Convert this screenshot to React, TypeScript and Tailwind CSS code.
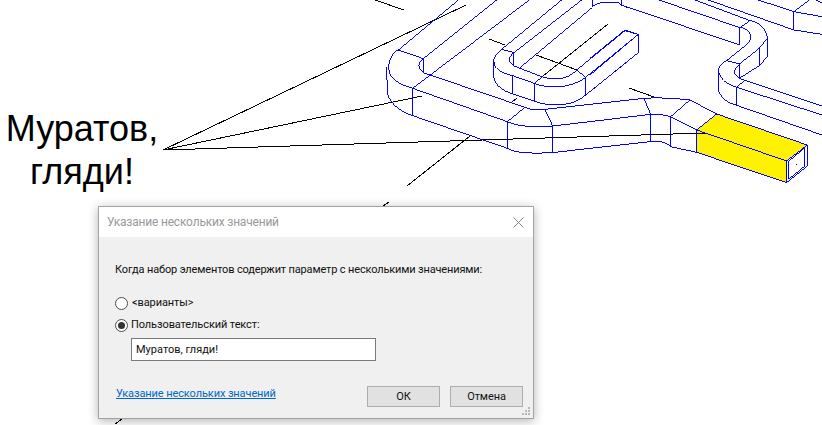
// 3x crop coordinates were easiest to read the drawing from, hence the scaled groups
const blackLines = [
  'M163 150L466 5',
  'M163 150L422 96',
  'M163 150L705 133',
  'M375 0L404 10',
  'M407 186L470 136',
  'M489 39L505 45',
  'M536 55L577 70',
  'M512 102L517 98',
  'M543 76L608 24',
  'M629 88L654 97',
  'M626 7L628 8',
  'M383 206L389 202',
  'M115 424L122 419',
];

const bigShape = [
  'M265 0L85 150C60 160 40 215 75 240C90 252 105 258 128 265L412 365C440 378 490 384 548 378L660 365',
  'M50 200L52 280C60 310 90 335 128 347L412 445C440 462 500 460 548 458L660 445',
  'M128 265V347M412 365V445M548 378V458',
  'M85 150L160 176V218C140 200 145 190 160 176M160 218L465 322C490 332 505 330 525 328L660 313',
  'M380 0L160 176M478 0L128 265M465 322L412 365M525 328C532 345 540 360 548 378',
];

const uShape = [
  'M245 0L65 148C45 165 38 180 42 185C42 195 45 200 50 205C65 218 80 222 98 227L163 250C200 265 270 268 317 232',
  'M42 185V235C45 250 60 270 98 282L163 303C210 322 280 320 317 285',
  'M98 227V282M163 250V303M317 232V285',
  'M65 148L102 158V198C82 182 85 172 102 158M305 0L102 158M102 198L180 228C215 243 265 240 290 210L317 232',
  'M118 205L337 22M163 250L190 228M290 210L435 92L475 103V158L317 285M317 232L475 103',
  'M337 0V20C350 12 358 8 365 8H415L425 15M425 0V15',
];

const rightShape = [
  'M93 15L450 135M207 0L450 83M315 0L480 62M355 0L612 90M505 0L612 35M612 35V90M612 35L696 50M612 90L696 103M612 35L658 0M678 0L696 8',
  'M450 83L480 62C505 65 530 85 532 115V170L508 197V145L532 115M450 83V135',
  'M450 83C475 85 492 105 475 130L410 182L448 192M508 145L448 192V235L508 197M448 195C428 210 430 222 448 235L696 318',
  'M410 182C390 190 385 205 385 215V270C395 300 420 310 440 316L696 405M385 215C395 245 420 256 440 262L696 345M440 262V316M440 262L465 240',
  'M105 90L145 103V158L0 275M0 175L105 90M0 225L145 103',
  'M0 313L162 295C200 292 260 295 300 300L380 342M0 365L182 343C200 342 225 345 242 350L320 390M0 445L182 425C205 422 225 424 242 440L320 457',
  'M162 295L182 343V425M242 350V440M242 350L300 300M320 390V457M320 390L380 342',
  'M380 342L652 435V498L590 548L320 457M320 390L590 483V548M652 435L590 483',
  'M597 483V537L645 498V443ZM618 493H620',
];

function Drawing() {
  return (
    <svg className="absolute inset-0" width="822" height="425" viewBox="0 0 822 425" fill="none" shapeRendering="crispEdges">
      <g transform="translate(590 0) scale(0.3333)">
        <path d="M320 390L380 342L652 435L590 483V548L320 457Z" fill="#fff200" />
      </g>
      <g stroke="#000" strokeWidth="1">
        {blackLines.map((d) => (
          <path key={d} d={d} />
        ))}
      </g>
      <g stroke="#0000ff" strokeWidth="3" transform="translate(370 0) scale(0.3333)">
        {bigShape.map((d) => (
          <path key={d} d={d} />
        ))}
      </g>
      <g stroke="#0000ff" strokeWidth="3" transform="translate(480 0) scale(0.3333)">
        {uShape.map((d) => (
          <path key={d} d={d} />
        ))}
      </g>
      <g stroke="#0000ff" strokeWidth="3" transform="translate(590 0) scale(0.3333)">
        {rightShape.map((d) => (
          <path key={d} d={d} />
        ))}
      </g>
    </svg>
  );
}

function Radio({ checked, label }: { checked?: boolean; label: string }) {
  return (
    <div className="flex h-[22px] items-center">
      <span className="flex h-[13px] w-[13px] items-center justify-center rounded-full border border-[#4d4d4d] bg-white">
        {checked ? <span className="h-[7px] w-[7px] rounded-full bg-[#333333]" /> : null}
      </span>
      <span className={checked ? 'ml-[3px]' : 'ml-[4px]'}>{label}</span>
    </div>
  );
}

function Grip() {
  return (
    <svg className="absolute bottom-[2px] right-[2px]" width="10" height="10" viewBox="0 0 10 10" fill="#b8b8b8">
      <rect x="7" y="1" width="2" height="2" />
      <rect x="4" y="4" width="2" height="2" />
      <rect x="7" y="4" width="2" height="2" />
      <rect x="1" y="7" width="2" height="2" />
      <rect x="4" y="7" width="2" height="2" />
      <rect x="7" y="7" width="2" height="2" />
    </svg>
  );
}

export default function App() {
  return (
    <div className="relative h-[425px] w-[822px] overflow-hidden bg-white">
      <Drawing />
      <p className="absolute left-[5px] top-[107px] w-[154px] text-center font-['Liberation_Sans',sans-serif] text-[36px] leading-[43px] text-black">
        Муратов, гляди!
      </p>

      <div className="absolute left-[98px] top-[206px] flex h-[213px] w-[436px] flex-col border border-[#a3a3a3] bg-[#f0f0f0] font-['Roboto',sans-serif] text-[11px] leading-[16px] tracking-[-0.1px] text-[#111111] shadow-[0_2px_10px_rgba(0,0,0,0.3)]">
        <div className="flex h-[30px] shrink-0 items-center justify-between bg-white pl-[8px] pr-[9px] text-[12px] tracking-[-0.2px] text-[#999999]">
          <span>Указание нескольких значений</span>
          <svg width="11" height="11" viewBox="0 0 11 11" stroke="#8a8a8a" strokeWidth="1" fill="none">
            <path d="M0.5 0.5L10.5 10.5M10.5 0.5L0.5 10.5" />
          </svg>
        </div>
        <div className="relative flex flex-1 flex-col pl-[16px] pr-[10px]">
          <p className="mt-[25px] tracking-[-0.15px]">Когда набор элементов содержит параметр с несколькими значениями:</p>
          <div className="mt-[14px]">
            <Radio label="<варианты>" />
            <Radio checked label="Пользовательский текст:" />
          </div>
          <div className="ml-[16px] mt-[2px] flex h-[23px] w-[245px] items-center border border-[#7a7a7a] bg-white px-[4px] tracking-normal">
            Муратов, гляди!
          </div>
          <div className="mt-auto mb-[11px] flex items-end justify-between">
            <a className="mb-[5px] ml-[1px] text-[#0066cc] underline">Указание нескольких значений</a>
            <div className="flex gap-[10px]">
              <button type="button" className="h-[21px] w-[73px] border border-[#adadad] bg-[#e1e1e1]">
                ОК
              </button>
              <button type="button" className="h-[21px] w-[73px] border border-[#adadad] bg-[#e1e1e1]">
                Отмена
              </button>
            </div>
          </div>
          <Grip />
        </div>
      </div>
    </div>
  );
}
